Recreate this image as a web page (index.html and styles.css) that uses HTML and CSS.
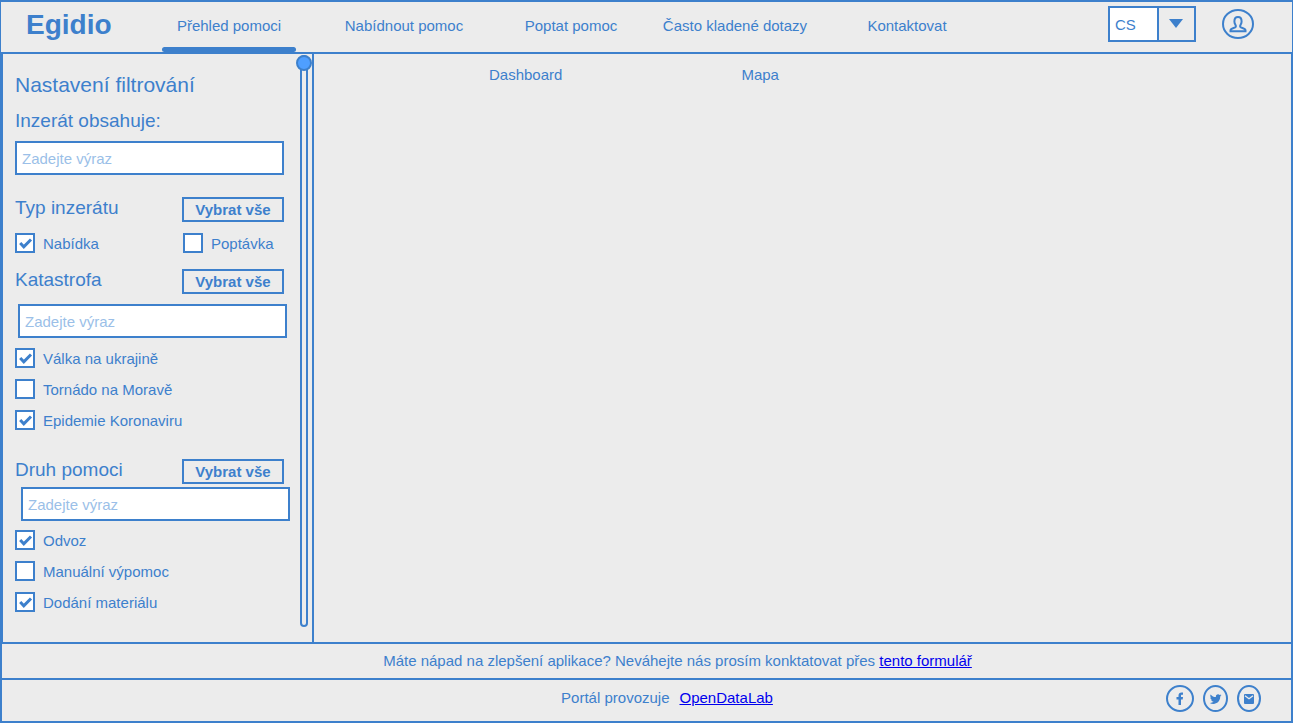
FILE: index.html
```html
<!DOCTYPE html>
<html lang="cs">
<head>
<meta charset="utf-8">
<meta name="viewport" content="width=device-width, initial-scale=1">
<title>Egidio</title>
<link rel="stylesheet" href="styles.css">
</head>
<body>
<header class="header">
  <h1 class="brand">Egidio</h1>
  <nav class="nav" aria-label="Hlavní">
    <a class="nav-link active" href="#prehled" aria-current="page">Přehled pomoci</a>
    <a class="nav-link" href="#nabidnout">Nabídnout pomoc</a>
    <a class="nav-link" href="#poptat">Poptat pomoc</a>
    <a class="nav-link" href="#dotazy">Často kladené dotazy</a>
    <a class="nav-link" href="#kontakt">Kontaktovat</a>
  </nav>
  <div class="language">
    <select class="language-select" aria-label="Jazyk"><option>CS</option></select>
    <svg class="language-arrow" viewBox="0 0 14 9" aria-hidden="true"><path d="M0 0h14L7 9z"/></svg>
  </div>
  <button class="account" type="button" aria-label="Účet">
    <svg viewBox="0 0 32 30" aria-hidden="true">
      <ellipse cx="16" cy="15" rx="15" ry="14"/>
      <path d="M8.500 22.300v-1.300c.3-1.700 3.300-1.900 4.700-2.700 1-.7.700-1.700.2-2.600-.6-1-1-2.200-1-3.300C12.400 9.500 13.800 8 16 8s3.600 1.500 3.600 4.400c0 1.100-.4 2.300-1 3.300-.5.900-.8 1.900.2 2.600 1.400.8 4.400 1 4.700 2.700v1.300z"/>
    </svg>
  </button>
</header>

<div class="content">
  <aside class="sidebar">
    <form class="filters">
      <h2 class="filters-title">Nastavení filtrování</h2>
      <label class="section-title field-label" for="text">Inzerát obsahuje:</label>
      <input class="search" id="text" type="text" placeholder="Zadejte výraz">

      <section class="group">
        <div class="group-head">
          <h3 class="section-title">Typ inzerátu</h3>
          <button class="select-all" type="button">Vybrat vše</button>
        </div>
        <div class="checks checks-pair">
          <label class="check"><input type="checkbox" checked>Nabídka</label>
          <label class="check"><input type="checkbox">Poptávka</label>
        </div>
      </section>

      <section class="group disaster">
        <div class="group-head">
          <h3 class="section-title">Katastrofa</h3>
          <button class="select-all" type="button">Vybrat vše</button>
        </div>
        <input class="search" type="text" placeholder="Zadejte výraz" aria-label="Hledat katastrofu">
        <div class="checks">
          <label class="check"><input type="checkbox" checked>Válka na ukrajině</label>
          <label class="check"><input type="checkbox">Tornádo na Moravě</label>
          <label class="check"><input type="checkbox" checked>Epidemie Koronaviru</label>
        </div>
      </section>

      <section class="group help">
        <div class="group-head">
          <h3 class="section-title">Druh pomoci</h3>
          <button class="select-all" type="button">Vybrat vše</button>
        </div>
        <input class="search" type="text" placeholder="Zadejte výraz" aria-label="Hledat druh pomoci">
        <div class="checks">
          <label class="check"><input type="checkbox" checked>Odvoz</label>
          <label class="check"><input type="checkbox">Manuální výpomoc</label>
          <label class="check"><input type="checkbox" checked>Dodání materiálu</label>
        </div>
      </section>
    </form>
    <input class="scroller" type="range" min="0" max="100" value="0" aria-label="Posun filtrů">
  </aside>

  <main class="main">
    <nav class="views" aria-label="Zobrazení">
      <a href="#dashboard">Dashboard</a>
      <a href="#mapa">Mapa</a>
    </nav>
  </main>
</div>

<footer class="footer">
  <p class="feedback">Máte nápad na zlepšení aplikace? Neváhejte nás prosím konktatovat přes <a class="link" href="#formular">tento formulář</a></p>
  <div class="about">
    <p class="operator"><span>Portál provozuje</span><a class="link" href="#opendatalab">OpenDataLab</a></p>
    <div class="social">
      <a href="#facebook" aria-label="Facebook">
        <svg width="28" height="27" viewBox="0 0 28 27"><ellipse cx="14" cy="13.500" rx="13" ry="12.500"/><path d="M12.500 20v-5.500h-2V12h2v-1.500c0-2 1.200-3 3-3H17v2.300h-1c-.8 0-1 .4-1 1V12h2l-.3 2.500H15V20z"/></svg>
      </a>
      <a href="#twitter" aria-label="Twitter">
        <svg width="25" height="27" viewBox="0 0 25 27"><ellipse cx="12.500" cy="13.500" rx="11.500" ry="12.500"/><path d="M18.500 10.300l-1.300.4c.5-.3.8-.7 1-1.200l-1.500.5c-1.600-1.500-4.200-.3-3.800 2.100-2.100-.1-4-1-5.300-2.700-.7 1.200-.3 2.600.8 3.400l-1.100-.3c0 1.200.8 2.200 2.100 2.500l-1.100.1c.3 1 1.200 1.700 2.300 1.700-1.100.8-2.300 1.200-3.900 1.100 4.500 2.700 10.700 0 10.500-6.300.5-.3.900-.8 1.300-1.300z"/></svg>
      </a>
      <a href="#email" aria-label="E-mail">
        <svg width="24" height="27" viewBox="0 0 24 27"><ellipse cx="12" cy="13.500" rx="11" ry="12.500"/><path d="M8 9h8q1 0 1 1v8q0 1-1 1H8q-1 0-1-1v-8q0-1 1-1z"/><path class="flap" d="M8 10.800l4 3 4-3"/></svg>
      </a>
    </div>
  </div>
</footer>
</body>
</html>
```
FILE: styles.css
```css
:root {
  --blue: #3d80cc;
  --paper: #ececec;
}

* { box-sizing: border-box; }

body {
  display: flex;
  flex-direction: column;
  min-height: 100vh;
  margin: 0;
  background: var(--paper);
  color: var(--blue);
  font: 15px/20px "Liberation Sans", Arial, sans-serif;
}

h1, h2, h3, p { margin: 0; font-weight: normal; }
a { color: inherit; text-decoration: none; }
input, select, button { font: inherit; color: inherit; }
svg { display: block; }

.header {
  display: flex;
  align-items: flex-start;
  padding: 0 38px 0 25px;
  border: 1px solid var(--blue);
  border-width: 2px 1px 2px 1px;
}

.brand {
  width: 136px;
  padding-top: 4px;
  font-size: 28px;
  line-height: 38px;
  font-weight: bold;
}

.nav {
  display: grid;
  grid-template-columns: 134px 216px 118px 210px 134px;
  margin-right: auto;
}

.nav-link {
  height: 50px;
  padding-top: 14px;
  text-align: center;
  white-space: nowrap;
}

.nav-link.active::after {
  content: "";
  display: block;
  height: 5px;
  margin-top: 11px;
  border-radius: 3px;
  background: var(--blue);
}

.language {
  position: relative;
  margin: 4px 26px 0 0;
}

.language-select {
  display: block;
  width: 88px;
  height: 36px;
  padding: 2px 5px 0;
  border: 2px solid var(--blue);
  border-radius: 0;
  appearance: none;
  background: linear-gradient(90deg, #fff 47px, var(--blue) 47px 49px, var(--paper) 49px);
}

.language-arrow {
  position: absolute;
  top: 13px;
  right: 13px;
  width: 14px;
  height: 9px;
  fill: var(--blue);
  pointer-events: none;
}

.account {
  width: 32px;
  margin: 7px 0 0;
  padding: 0;
  border: 0;
  background: none;
}

.account svg {
  width: 32px;
  height: 30px;
  fill: none;
  stroke: var(--blue);
  stroke-width: 2;
}

.content {
  display: flex;
  flex: 1;
}

.sidebar {
  display: flex;
  justify-content: space-between;
  width: 314px;
  padding-left: 12px;
  border-left: 3px solid var(--blue);
  border-right: 2px solid var(--blue);
}

.filters {
  display: flex;
  flex-direction: column;
  width: 275px;
  padding: 16px 0 30px;
}

.filters-title {
  font-size: 21px;
  line-height: 30px;
}

.section-title {
  font-size: 19px;
  line-height: 22px;
}

.field-label { margin: 10px 0 9px; }

.search {
  width: 269px;
  height: 34px;
  padding: 0 5px;
  border: 2px solid var(--blue);
  background: #fff;
}

.search::placeholder { color: #9bbfe8; }

.group {
  display: flex;
  flex-direction: column;
  margin-top: 22px;
}

.group-head {
  display: flex;
  justify-content: space-between;
  align-items: flex-start;
  width: 269px;
}

.select-all {
  width: 102px;
  height: 25px;
  padding: 0;
  border: 2px solid var(--blue);
  background: none;
  font-weight: bold;
}

.checks {
  display: grid;
  gap: 11px;
}

.checks-pair {
  grid-template-columns: 157px auto;
  margin-top: 11px;
}

.disaster { margin-top: 16px; gap: 10px; }
.disaster .search { align-self: center; }
.help { margin-top: 29px; }
.help .search { align-self: flex-end; margin: 3px 0 9px; }

.check {
  display: flex;
  gap: 8px;
  line-height: 22px;
  height: 20px;
}

.check input {
  width: 20px;
  height: 20px;
  margin: 0;
  border: 2px solid var(--blue);
  appearance: none;
  background: #fff;
}

.check input:checked {
  background: #fff url("data:image/svg+xml,%3Csvg xmlns='http://www.w3.org/2000/svg' viewBox='0 0 16 16'%3E%3Cpath d='M3.200 8l3.600 3.800L14 4.500' fill='none' stroke='%233d80cc' stroke-width='3'/%3E%3C/svg%3E");
}

.scroller {
  width: 16px;
  margin: 1px 0 15px;
  appearance: none;
  writing-mode: vertical-lr;
  background: none;
}

.scroller::-webkit-slider-runnable-track {
  width: 8px;
  border-radius: 4px;
  box-shadow: inset 0 0 0 2px var(--blue);
}

.scroller::-webkit-slider-thumb {
  width: 16px;
  height: 16px;
  margin-left: -4px;
  border: 2px solid var(--blue);
  border-radius: 50%;
  appearance: none;
  background: #4f9fff;
}

.main {
  flex: 1;
  border-right: 2px solid var(--blue);
}

.views {
  display: flex;
  gap: 179px;
  padding: 11px 0 0 175px;
}

.footer {
  border: 2px solid var(--blue);
}

.feedback {
  padding: 7px 0 7px 62px;
  text-align: center;
}

.about {
  display: grid;
  grid-template-columns: 1fr auto 1fr;
  padding: 5px 30px 9px 71px;
  border-top: 2px solid var(--blue);
}

.operator {
  display: flex;
  grid-column: 2;
  gap: 10px;
  padding-top: 3px;
}

.link {
  color: #00e;
  text-decoration: underline;
}

.social {
  display: flex;
  gap: 9px;
  justify-self: end;
}

.social svg { fill: var(--blue); }

.social ellipse, .social .flap {
  fill: none;
  stroke: var(--blue);
  stroke-width: 2;
}

.social .flap {
  stroke: var(--paper);
  stroke-width: 1.3;
}
```
